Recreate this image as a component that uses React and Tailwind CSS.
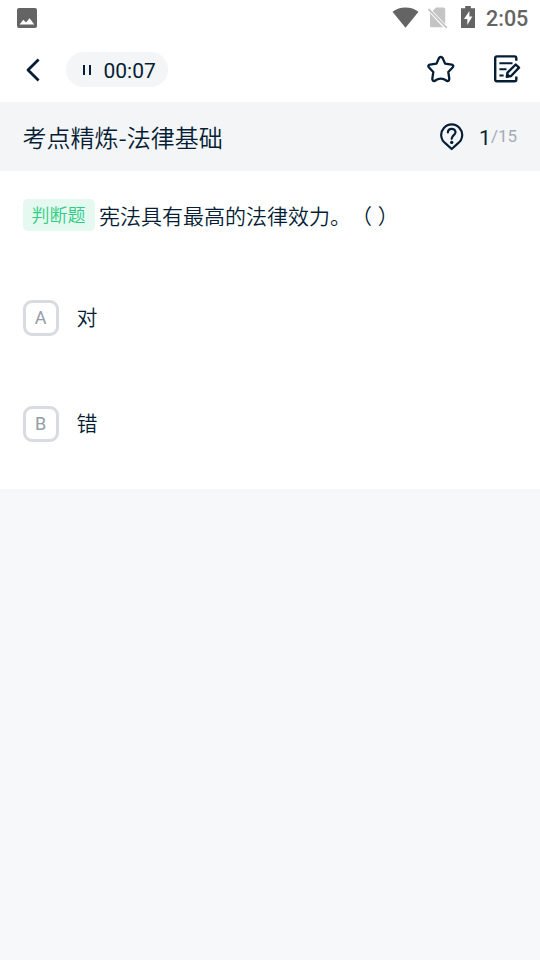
function StatusBar() {
  return (
    <div className="flex h-9 items-center pr-3 pl-[17px] text-[#646464]">
      <svg width="20" height="20" viewBox="0 0 20 20" fill="currentColor">
        <path fillRule="evenodd" d="M2 0H18Q20 0 20 2V18Q20 20 18 20H2Q0 20 0 18V2Q0 0 2 0ZM2.6 16.500H17.300L12.600 10.200L9 14.600L6.300 11.800Z" />
      </svg>
      <svg className="ml-auto" width="28" height="22" viewBox="0 0 28 22" fill="currentColor">
        <path d="M13.500 20.800L.500 4.800Q6 .400 13.500 .400T26.500 4.800Z" />
      </svg>
      <svg className="ml-2" width="20" height="22" viewBox="0 0 20 22">
        <path fill="#c4c4c4" d="M7.800 .600H15.500Q17.200 .600 17.200 2.200V17L4.800 4ZM2 6.200L15 20.300H3.500Q2 20.300 2 18.400Z" />
        <path d="M.4 2L18.800 20.800" stroke="#c4c4c4" strokeWidth="1.800" />
      </svg>
      <svg className="mb-[2px] ml-[13px]" width="14" height="22" viewBox="0 0 14 22" fill="currentColor">
        <path fillRule="evenodd" d="M4.200 0H9.800V2.200H14V22H0V2.200H4.200ZM8.400 5L3 13H6.300V19L11.400 10.600H8.400Z" />
      </svg>
      <span className="ml-[11px] w-[42px] pt-0.5 text-[21.5px] leading-6 font-medium whitespace-nowrap">2:05</span>
    </div>
  );
}

function Toolbar() {
  return (
    <header className="flex h-[66px] items-center pl-[26px] pr-[19px]">
      <svg className="mt-px shrink-0" width="14" height="24" viewBox="0 0 14 24" fill="none" stroke="currentColor" strokeWidth="2.8" strokeLinecap="square" strokeLinejoin="round">
        <path d="M11.600 2.500L2 12L11.600 21.500" />
      </svg>
      <div className="ml-[26px] flex h-[35px] w-[102px] items-center rounded-full bg-[#f3f5f7] pl-[17px]">
        <div className="mt-0.5 flex gap-[4px]">
          <span className="h-[10px] w-[2px] bg-[#061e35]" />
          <span className="h-[10px] w-[2px] bg-[#061e35]" />
        </div>
        <span className="ml-[12.5px] pt-[3px] text-[21px] leading-6">00:07</span>
      </div>
      <svg className="ml-auto" width="28" height="28" viewBox="0 0 28 28" fill="none" stroke="currentColor" strokeWidth="2.3" strokeLinejoin="round">
        <path d="M12.100 2.800Q13.800 1.100 15.500 2.800L18.100 8.600L24.800 9.600Q27.100 10.400 25.800 12.300L21.300 17L22.300 23.900Q22.100 26.600 19.700 25.800Q13.800 21.600 7.900 25.800Q5.500 26.600 5.300 23.900L6.300 17L1.800 12.300Q.500 10.400 2.800 9.600L9.500 8.600Z" />
      </svg>
      <svg className="ml-[38px]" width="28" height="28" viewBox="0 0 28 28" fill="none" stroke="currentColor" strokeWidth="2.400">
        <path d="M23.300 5.800V3.200Q23.300 1.400 21.500 1.400H4Q2.200 1.400 2.200 3.200V24.400Q2.200 26.200 4 26.200H21.500Q23.300 26.200 23.300 24.400V21.500" />
        <path d="M6.400 8.200H19.500M6.400 14.200H13.500M6.400 20.400H10.600" strokeWidth="2" />
        <path d="M22.700 9.500L26 12.700L18.100 21L13.800 21.800L14.500 17.600Z" strokeLinejoin="round" />
        <path d="M14 17.500L18 21.300L13.200 22.300Z" fill="currentColor" stroke="none" />
      </svg>
    </header>
  );
}

function Option({ letter, text }) {
  return (
    <div className="flex h-9 items-center">
      <span className="flex size-9 items-center justify-center rounded-[9px] border-3 border-[#d8dbdf] text-[18px] leading-none text-[#949ca6]">{letter}</span>
      <span className="ml-[18px] pb-1 font-['Noto_Sans_CJK_SC_DemiLight','Noto_Sans_CJK_SC',sans-serif] text-[21px] leading-8 font-[350]">{text}</span>
    </div>
  );
}

export default function App() {
  return (
    <div className="flex h-[960px] w-[540px] flex-col bg-[#f7f8fa] font-[Roboto,'Noto_Sans_CJK_SC',sans-serif] text-[#061e35]">
      <div className="bg-white">
        <StatusBar />
        <Toolbar />
      </div>
      <div className="flex h-[69px] items-center bg-[#f3f5f7] pl-[22.5px] pr-[23px]">
        <h1 className="pt-px font-['Noto_Sans_CJK_SC_DemiLight','Noto_Sans_CJK_SC',sans-serif] text-[24px] leading-9 font-[350]">考点精炼-法律基础</h1>
        <svg className="ml-auto" width="24" height="28" viewBox="0 0 24 28" fill="none" stroke="currentColor" strokeWidth="2.2" strokeLinejoin="round">
          <path d="M11.700 26L5.500 20.400A10.500 10.500 0 1 1 17.900 20.400Z" />
          <path d="M7.900 9.500C7.900 4.700 15.500 4.700 15.500 9.300C15.500 12.200 11.700 12.200 11.700 15.800" strokeLinecap="round" />
          <circle cx="11.700" cy="19.400" r="1.700" fill="currentColor" stroke="none" />
        </svg>
        <div className="ml-[15px] flex items-start whitespace-nowrap">
          <span className="pt-0.5 text-[21px] leading-6">1</span>
          <span className="text-[17px] leading-6 text-[#a4abb7]">/15</span>
        </div>
      </div>
      <main className="h-[318px] bg-white px-[22.5px] pt-7">
        <div className="flex h-8 items-center">
          <span className="flex h-8 w-[72px] items-center justify-center rounded-[5px] bg-[#e5f9f0] pb-[2px] font-['Noto_Sans_CJK_SC_DemiLight','Noto_Sans_CJK_SC',sans-serif] text-[18px] leading-[18px] font-[350] text-[#2dce84]">判断题</span>
          <p className="ml-[4.5px] font-['Noto_Sans_CJK_SC_DemiLight','Noto_Sans_CJK_SC',sans-serif] text-[21px] leading-8 font-[350] [text-spacing-trim:space-all] [word-spacing:1px]">宪法具有最高的法律效力。（ ）</p>
        </div>
        <div className="mt-[69px] flex flex-col gap-[70px]">
          <Option letter="A" text="对" />
          <Option letter="B" text="错" />
        </div>
      </main>
    </div>
  );
}
